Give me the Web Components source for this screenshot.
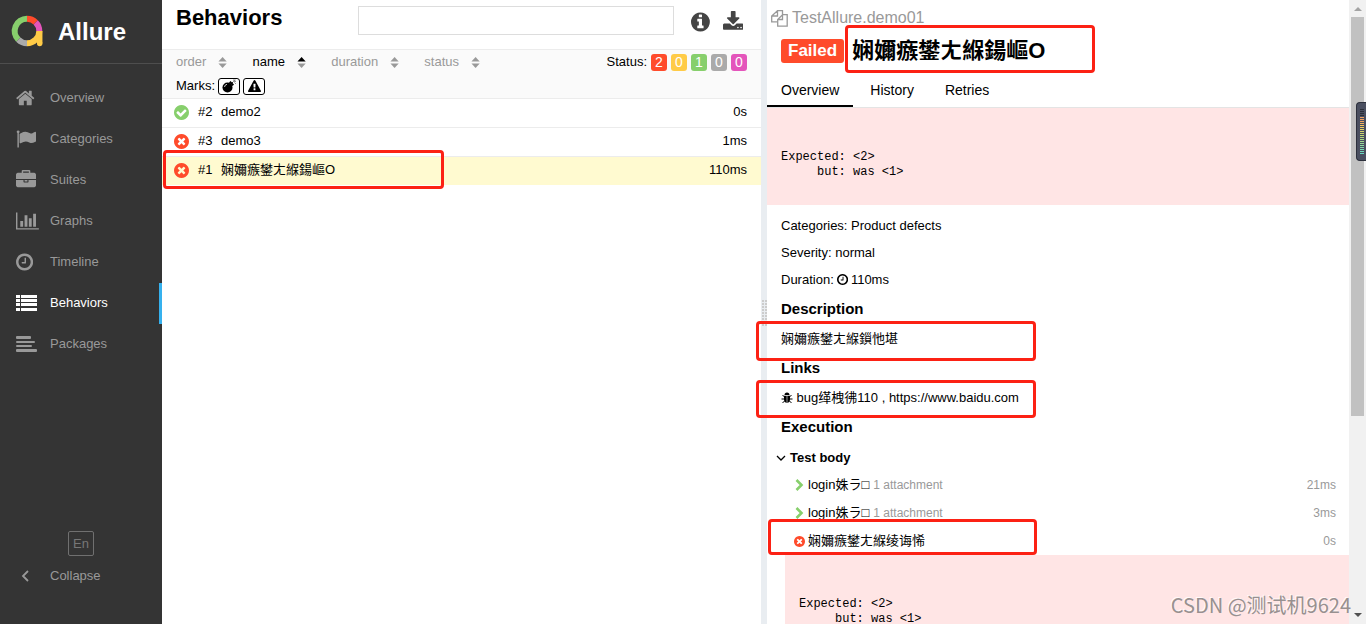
<!DOCTYPE html>
<html lang="en">
<head>
<meta charset="utf-8">
<title>Allure Report</title>
<style>
html,body{height:100%;margin:0}
body{font:13px/20px "Liberation Sans","Noto Sans CJK SC",sans-serif;color:#000;background:#fff;overflow:hidden}
</style>
</head>
<body>
<allure-app></allure-app>
<script>
const define = (name, html, setup) => {
  const t = document.createElement('template');
  t.innerHTML = '<style>*{box-sizing:border-box}:host{box-sizing:border-box}a{color:inherit;text-decoration:none}button{font:inherit;color:inherit;background:none;border:0;padding:0;margin:0;cursor:pointer}h1,h2,h3,p,pre{margin:0}</style>' + html;
  customElements.define(name, class extends HTMLElement {
    constructor() {
      super();
      this.attachShadow({mode: 'open'}).append(t.content.cloneNode(true));
    }
    connectedCallback() { if (setup) setup(this, this.shadowRoot); }
  });
};

const disc = 'M1664 896q0 209-103 385.5t-279.5 279.5-385.5 103-385.5-103-279.5-279.5-103-385.5 103-385.5 279.5-279.5 385.5-103 385.5 103 279.5 279.5 103 385.5z';
const ring = 'zm387-226q0 209-103 385.5t-279.5 279.5-385.5 103-385.5-103-279.5-279.5-103-385.5 103-385.5 279.5-279.5 385.5-103 385.5 103 279.5 279.5 103 385.5z';
const icons = {
  home: ['64 0 1664 1792', '<path d="M1472 992v480q0 26-19 45t-45 19h-384v-384h-256v384h-384q-26 0-45-19t-19-45v-480q0-1 .5-3t.5-3l575-474 575 474q1 2 1 6zm223-69l-62 74q-8 9-21 11h-3q-13 0-21-7l-692-577-692 577q-12 8-24 7-13-2-21-11l-62-74q-8-10-7-23.500t11-21.500l719-599q32-26 76-26t76 26l244 204v-195q0-14 9-23t23-9h192q14 0 23 9t9 23v408l219 182q10 8 11 21.500t-7 23.500z"/>'],
  flag: ['0 0 1792 1792', '<path d="M320 256q0 72-64 110v1266q0 13-9.500 22.500t-22.500 9.500h-64q-13 0-22.500-9.500t-9.500-22.500v-1266q-64-38-64-110 0-53 37.500-90.500t90.500-37.500 90.500 37.500 37.500 90.500zm1472 64v763q0 25-12.500 38.500t-39.500 27.500q-215 116-369 116-61 0-123.500-22t-108.500-48-115.500-48-142.500-22q-192 0-464 146-17 9-33 9-26 0-45-19t-19-45v-742q0-32 31-55 21-14 79-43 236-120 421-120 107 0 200 29t219 88q38 19 88 19 54 0 117.500-21t110-47 88-47 54.500-21q26 0 45 19t19 45z"/>'],
  briefcase: ['0 0 1792 1792', '<path d="M640 256h512v-128h-512v128zm1152 640v480q0 66-47 113t-113 47h-1472q-66 0-113-47t-47-113v-480h672v160q0 26 19 45t45 19h320q26 0 45-19t19-45v-160h672zm-768 0v128h-256v-128h256zm768-480v384h-1792v-384q0-66 47-113t113-47h352v-160q0-40 28-68t68-28h576q40 0 68 28t28 68v160h352q66 0 113 47t47 113z"/>'],
  chart: ['0 0 2048 1792', '<path d="M640 896v512h-256v-512h256zm384-512v1024h-256v-1024h256zm1024 1152v128h-2048v-1536h128v1408h1920zm-640-896v768h-256v-768h256zm384-384v1152h-256v-1152h256z"/>'],
  clock: ['128 0 1536 1792', '<path d="M1024 544v448q0 14-9 23t-23 9h-320q-14 0-23-9t-9-23v-64q0-14 9-23t23-9h224v-352q0-14 9-23t23-9h64q14 0 23 9t9 23zm416 352q0-148-73-273t-198-198-273-73-273 73-198 198-73 273 73 273 198 198 273 73 273-73 198-198 73-273zm224 0q0 209-103 385.500t-279.500 279.500-385.500 103-385.500-103-279.500-279.500-103-385.500 103-385.500 279.500-279.500 385.500-103 385.500 103 279.500 279.500 103 385.500z"/>'],
  list: ['0 0 21 20', '<path d="M0 2h4v3H0zM5 2h16v3H5zM0 6h4v3H0zM5 6h16v3H5zM0 10h4v3H0zM5 10h16v3H5zM0 15h4v3H0zM5 15h16v3H5z"/>'],
  lines: ['0 0 21 20', '<rect y="2" width="15" height="3" rx="1"/><rect y="7" width="19" height="2" rx="1"/><rect y="11" width="16" height="2" rx="1"/><rect y="15" width="21" height="3" rx="1"/>'],
  left: ['0 0 8 12', '<path d="M7 1 2 6l5 5" fill="none" stroke="currentColor" stroke-width="1.800"/>'],
  info: ['128 0 1536 1792', '<path d="M1152 1376v-160q0-14-9-23t-23-9h-96v-512q0-14-9-23t-23-9h-320q-14 0-23 9t-9 23v160q0 14 9 23t23 9h96v320h-96q-14 0-23 9t-9 23v160q0 14 9 23t23 9h448q14 0 23-9t9-23zm-128-896v-160q0-14-9-23t-23-9h-192q-14 0-23 9t-9 23v160q0 14 9 23t23 9h192q14 0 23-9t9-23zm640 416q0 209-103 385.500t-279.500 279.500-385.500 103-385.500-103-279.500-279.500-103-385.500 103-385.500 279.500-279.500 385.500-103 385.500 103 279.500 279.500 103 385.500z"/>'],
  download: ['64 0 1664 1792', '<path d="M1344 1344q0-26-19-45t-45-19-45 19-19 45 19 45 45 19 45-19 19-45zm256 0q0-26-19-45t-45-19-45 19-19 45 19 45 45 19 45-19 19-45zm128-224v320q0 40-28 68t-68 28h-1472q-40 0-68-28t-28-68v-320q0-40 28-68t68-28h465l135 136q58 56 136 56t136-56l136-136h464q40 0 68 28t28 68zm-325-569q17 41-14 70l-448 448q-18 19-45 19t-45-19l-448-448q-31-29-14-70 17-39 59-39h256v-448q0-26 19-45t45-19h256q26 0 45 19t19 45v448h256q42 0 59 39z"/>'],
  passed: ['128 128 1536 1536', '<path fill-rule="evenodd" d="M1412 734q0-28-18-46l-91-90q-19-19-45-19t-45 19l-408 407-226-226q-19-19-45-19t-45 19l-91 90q-18 18-18 46 0 27 18 45l362 362q19 19 45 19 27 0 46-19l543-543q18-18 18-45z' + disc + '"/>'],
  failed: ['128 128 1536 1536', '<path d="M1277 1122q0-26-19-45l-181-181 181-181q19-19 19-45 0-27-19-46l-90-90q-19-19-46-19-26 0-45 19l-181 181-181-181q-19-19-45-19-27 0-46 19l-90 90q-19 19-19 46 0 26 19 45l181 181-181 181q-19 19-19 45 0 27 19 46l90 90q19 19 46 19 26 0 45-19l181-181 181 181q19 19 45 19 27 0 46-19l90-90q19-19 19-46' + ring + '"/>'],
  warning: ['0 0 1792 1792', '<path d="M1024 1375v-190q0-14-9.500-23.500t-22.500-9.500h-192q-13 0-22.500 9.500t-9.500 23.500v190q0 14 9.500 23.500t22.500 9.500h192q13 0 22.500-9.500t9.500-23.500zm-2-374l18-459q0-12-10-19-13-11-24-11h-220q-11 0-24 11-10 7-10 21l17 457q0 10 10 16.500t24 6.500h185q14 0 23.500-6.500t10.500-16.500zm-14-934l768 1408q35 63-2 126-17 29-46.500 46t-63.500 17h-1536q-34 0-63.500-17t-46.500-46q-37-63-2-126l768-1408q17-31 47-49t65-18 65 18 47 49z"/>'],
  bomb: ['0 0 14 14', '<circle cx="5.500" cy="8.500" r="5"/><path d="M7 3.500 8.500 2 12 5.500 10.500 7z"/><path d="m10 4 1.500-1.500M12 .5v1.200M13.500 2.500h-1M13.700.7l-.8.8M13.500 4.500l-.8-.8" stroke="currentColor" stroke-width=".8"/><path d="M2.500 8a3 3 0 0 1 2.500-2.700" stroke="#fff" stroke-width=".8" fill="none"/>'],
  sort: ['0 0 10 12', '<path d="M5 0 9.500 5h-9z" class="up"/><path d="M5 12 9.500 7h-9z"/>'],
  copy: ['0 0 17 17', '<path d="M6.500 4V.7h5V4.700M6.500.7.7 6v5.800H6M.7 6h5.800V1M11.500 4.700h4.700v11.500H6.700V9.500l4.800-4.800v4.800H7" fill="none" stroke="currentColor" stroke-width="1.300"/>'],
  bug: ['0 0 12 12', '<path d="M3.500 3a2.500 2.500 0 0 1 5 0zM3 3.800h2.700V11Q3 10.500 3 8zM6.300 3.800H9V8q0 2.500-2.700 3z"/><path d="M3.500 5 1.500 3M8.500 5l2-2M3 7H.5M9 7h2.500M3.500 9l-2 2M8.500 9l2 2" stroke="currentColor"/>'],
  down: ['0 0 10 10', '<path d="m1 3 4 4 4-4" fill="none" stroke="currentColor" stroke-width="1.300"/>'],
  right: ['0 0 9 12', '<path d="m1.500 1 5 5-5 5" fill="none" stroke="currentColor" stroke-width="2.600"/>'],
};
define('al-icon', '<style>:host{display:inline-flex;flex:none}div{display:flex}svg{display:block;width:auto}.up{fill:var(--up,currentColor)}</style><div></div>', (host, root) => {
  const [box, body] = icons[host.getAttribute('name')];
  const h = host.getAttribute('size') || 20;
  root.querySelector('div').innerHTML = `<svg viewBox="${box}" height="${h}" fill="currentColor" aria-hidden="true">${body}</svg>`;
});

define('side-link', `<style>
:host{display:block;color:#999}
a{display:flex;align-items:center;height:41px;padding:0 0 2px 16px;border-right:3px solid transparent}
span{width:34px;flex:none;display:flex}
:host([active]){color:#fff}
:host([active]) a{border-color:#36b1ee}
</style><a href="#"><span><slot name="icon"></slot></span><slot></slot></a>`);

define('side-nav', `<style>
:host{display:flex;flex-direction:column;background:#343434}
header{display:flex;align-items:center;gap:14px;height:64px;padding-left:11px;border-bottom:1px solid #4e4e4e;font-weight:bold;font-size:24px;color:#fff}
svg{flex:none}
nav{padding-top:14px}
footer{margin-top:auto;padding-bottom:28px;color:#999}
.lang{display:block;width:26px;height:25px;margin:0 auto;border:1px solid #707070;border-radius:2px;color:#777}
.fold{display:flex;align-items:center;height:40px;padding-left:21px;width:100%}
.fold al-icon{width:29px}
</style>
<header>
<svg width="33" height="33" viewBox="0 0 33 33" fill="none" stroke-width="6">
<path d="M7.300 24.700A12.300 12.300 0 0 1 16 3.700" stroke="#87cf6c"/>
<path d="M16 3.700A12.300 12.300 0 0 1 24.700 7.300" stroke="#ff4b2b"/>
<path d="M24.700 7.300A12.300 12.300 0 0 1 28.300 16" stroke="#e455bb"/>
<path d="M16 28.300A12.300 12.300 0 0 1 7.300 24.700" stroke="#aaa"/>
<path d="M28.300 16A12.300 12.300 0 0 1 16 28.300" stroke="#ffcb47"/>
<path d="M28.700 16v12.500" stroke="#ffcb47" stroke-width="5.500"/><circle cx="28.700" cy="28.500" r="2.700" fill="#ffcb47" stroke="none"/>
</svg>Allure</header>
<nav>
<side-link><al-icon slot="icon" name="home"></al-icon>Overview</side-link>
<side-link><al-icon slot="icon" name="flag"></al-icon>Categories</side-link>
<side-link><al-icon slot="icon" name="briefcase"></al-icon>Suites</side-link>
<side-link><al-icon slot="icon" name="chart"></al-icon>Graphs</side-link>
<side-link><al-icon slot="icon" name="clock"></al-icon>Timeline</side-link>
<side-link active><al-icon slot="icon" name="list"></al-icon>Behaviors</side-link>
<side-link><al-icon slot="icon" name="lines"></al-icon>Packages</side-link>
</nav>
<footer><button class="lang">En</button><button class="fold"><al-icon name="left" size="12"></al-icon>Collapse</button></footer>`);

define('sort-button', `<style>
:host{display:block;color:#999}
button{display:flex;align-items:center;gap:12px}
al-icon{color:#999}
:host([active]){color:#000;--up:#000}
</style><button><slot></slot><al-icon name="sort" size="11"></al-icon></button>`);

define('count-badge', `<style>
:host{display:block}
button{display:block;width:16px;height:17px;border-radius:3px;background:var(--tone);color:#fff;font-size:14px;line-height:17px;text-align:center}
</style><button><slot></slot></button>`);

define('list-row', `<style>
:host{display:block;border-bottom:1px solid #ececec}
a{display:flex;align-items:center;height:28px;padding:0 14px 2px 12px}
.i{width:24px;padding-top:1px;display:flex}
.n{width:23px}
.t{margin-left:auto}
:host([selected]){background:#fffad0;border:0}
:host([status=passed]) .i{color:#87cf6c}
:host([status=failed]) .i{color:#ff4b2b}
</style><a href="#"><span class="i"></span><span class="n"><slot name="order"></slot></span><slot></slot><span class="t"><slot name="time"></slot></span></a>`, (host, root) => {
  root.querySelector('.i').innerHTML = `<al-icon name="${host.getAttribute('status')}" size="15"></al-icon>`;
});

define('test-tree', `<style>
:host{display:block;min-width:0}
header{display:flex;height:50px;padding:6px 18px 0 14px;border-bottom:1px solid #ececec}
h1{font-size:22px;line-height:24px;width:182px;flex:none}
input{flex:1;min-width:0;height:29px;border:1px solid #ddd;background:#fff;font:inherit}
.act{display:flex;gap:13px;margin-left:17px;padding-top:5px;color:#444}
.act button{display:block;height:22px}
.bar{background:#fafafa;height:49px;border-bottom:1px solid #ececec;padding:2px 14px 0}
.sorts{display:flex;height:20px;line-height:20px}
.sorts sort-button{margin-right:25px}
.st{margin-left:auto;display:flex;align-items:center;gap:4px}
.marks{display:flex;align-items:center;gap:3px;height:28px}
.marks button{display:flex;align-items:center;justify-content:center;width:22px;height:17px;border:1px solid #000;border-radius:3px;background:#fff}
</style>
<header><h1>Behaviors</h1><input type="search" aria-label="Search"><div class="act"><button aria-label="Info"><al-icon name="info" size="22"></al-icon></button><button aria-label="Download"><al-icon name="download" size="22"></al-icon></button></div></header>
<div class="bar">
<div class="sorts"><sort-button>order</sort-button><sort-button active>name</sort-button><sort-button>duration</sort-button><sort-button>status</sort-button>
<div class="st">Status: <count-badge style="--tone:#ff4b2b">2</count-badge><count-badge style="--tone:#ffcb47">0</count-badge><count-badge style="--tone:#87cf6c">1</count-badge><count-badge style="--tone:#aaa">0</count-badge><count-badge style="--tone:#e455bb">0</count-badge></div></div>
<div class="marks">Marks: <button aria-label="Flaky"><al-icon name="bomb" size="14"></al-icon></button><button aria-label="Broken"><al-icon name="warning" size="13"></al-icon></button></div>
</div>
<list-row status="passed"><span slot="order">#2</span>demo2<span slot="time">0s</span></list-row>
<list-row status="failed"><span slot="order">#3</span>demo3<span slot="time">1ms</span></list-row>
<list-row status="failed" selected><span slot="order">#1</span>娴嬭瘯鐢ㄤ緥鍚嶇О<span slot="time">110ms</span></list-row>`);

define('error-trace', `<style>
:host{display:block;background:#ffe5e5}
pre{padding:42px 14px 25px;font:12px/15px "Liberation Mono",monospace}
</style><pre>Expected: &lt;2&gt;
     but: was &lt;1&gt;</pre>`);

define('info-section', `<style>
:host{display:block;padding:0 14px}
h3{font-size:15px;line-height:20px}
p{padding:10px 0 9px;line-height:20px}
</style><h3><slot name="title"></slot></h3><p><slot></slot></p>`);

define('test-step', `<style>
:host{display:block}
button{display:flex;align-items:center;width:100%;height:28px;padding:0 13px 0 27px;text-align:left;line-height:20px}
.i{width:14px;display:flex;color:#ff4b2b}
:host([status=passed]) .i{color:#87cf6c;padding-left:1px}
.a,.t{color:#999}
.a{margin-left:4px;font-size:12px}
.t{margin-left:auto;font-size:12px}
</style><button><span class="i"></span><slot></slot><span class="a"><slot name="note"></slot></span><span class="t"><slot name="time"></slot></span></button>`, (host, root) => {
  const ok = host.getAttribute('status') === 'passed';
  root.querySelector('.i').innerHTML = `<al-icon name="${ok ? 'right' : 'failed'}" size="${ok ? 12 : 11}"></al-icon>`;
});

define('test-result', `<style>
:host{display:block;min-width:0;overflow:hidden}
.path{display:flex;align-items:center;gap:4px;height:28px;padding:8px 4px 0;font-size:16px;color:#999}
.title{display:flex;align-items:center;gap:8px;height:45px;padding-left:14px}
.title span{height:24px;padding:0 7px;border-radius:3px;background:#ff4b2b;color:#fff;font-weight:bold;font-size:17px;line-height:24px}
h2{font-size:22px;line-height:28px}
.tabs{display:flex;gap:3px;height:35px;border-bottom:1px solid #e4e4e4}
.tabs a{height:34px;padding:0 14px;font-size:14px;line-height:34px}
.tabs .on{border-bottom:2px solid #000}
.facts{padding:7px 14px 6px}
.facts p{display:flex;align-items:center;gap:3px;line-height:27px}
.body{display:flex;align-items:center;gap:4px;width:100%;height:26px;padding-left:9px;font-weight:bold}
.exec{padding:0 14px 8px;font-size:15px}
error-trace.in{margin-left:18px}
</style>
<div class="path"><al-icon name="copy" size="17"></al-icon><a href="#">TestAllure.demo01</a></div>
<div class="title"><span>Failed</span><h2>娴嬭瘯鐢ㄤ緥鍚嶇О</h2></div>
<nav class="tabs"><a href="#" class="on">Overview</a><a href="#">History</a><a href="#">Retries</a></nav>
<error-trace></error-trace>
<div class="facts"><p>Categories: Product defects</p><p>Severity: normal</p><p>Duration: <al-icon name="clock" size="13"></al-icon>110ms</p></div>
<info-section><span slot="title">Description</span>娴嬭瘯鐢ㄤ緥鎻忚堪</info-section>
<info-section><span slot="title">Links</span><a href="#"><al-icon name="bug" size="12" style="vertical-align:-2px"></al-icon> bug缂栧彿110</a> , <a href="#">https://www.baidu.com</a></info-section>
<h3 class="exec">Execution</h3>
<button class="body"><al-icon name="down" size="10"></al-icon>Test body</button>
<test-step status="passed">login姝ラ□<span slot="note">1 attachment</span><span slot="time">21ms</span></test-step>
<test-step status="passed">login姝ラ□<span slot="note">1 attachment</span><span slot="time">3ms</span></test-step>
<test-step status="failed">娴嬭瘯鐢ㄤ緥绫诲悕<span slot="time">0s</span></test-step>
<error-trace class="in"></error-trace>`);

define('split-gutter', `<style>
:host{display:flex;align-items:center;justify-content:center;background:#e9edf1}
i{width:5px;height:27px;background:repeating-linear-gradient(#e9edf1 0 1px,transparent 1px 3px),repeating-linear-gradient(90deg,#ccc 0 2px,#e9edf1 2px 3px)}
</style><i></i>`);

define('scroll-rail', `<style>
:host{display:flex;flex-direction:column;align-items:center;background:#f1f1f1;position:relative}
i{border:4px solid transparent;border-top:0;border-bottom:4px solid #a3a3a3;margin:7px 0 6px}
i.d{border-top:4px solid #505050;border-bottom:0;margin:auto 0 7px}
b{width:13px;height:64%;background:#c1c1c1}
.meter{position:absolute;right:0;top:102px;width:10px;height:59px;border:1px solid #2c303c;border-right:0;border-radius:4px 0 0 4px;background:#4a4f60;padding:6px 0 0 3px}
.meter u{display:block;width:4px;height:46px;background:repeating-linear-gradient(transparent 0 1px,#4a4f60 1px 2px),linear-gradient(#2a2e38 0 18%,#f0a060 18% 26%,#f0cf60 40%,#b8d878 60%,#60d8c8)}
</style><i></i><b></b><i class="d"></i><div class="meter"><u></u></div>`);

define('mark-box', '<style>:host{position:absolute;border:3px solid #fc2114;border-radius:4px;pointer-events:none}</style>');

define('allure-app', `<style>
:host{display:grid;grid-template-columns:162px minmax(0,599fr) 6px minmax(0,582fr) 17px;grid-template-rows:100%;height:100vh;position:relative;overflow:hidden}
.wm{position:absolute;right:15px;bottom:5px;font:20px/28px "Noto Sans CJK SC",sans-serif;color:#989090;text-shadow:-1px -1px #fffc}
</style>
<side-nav></side-nav><test-tree></test-tree><split-gutter></split-gutter><test-result></test-result><scroll-rail></scroll-rail>
<mark-box style="left:163px;top:150px;width:281px;height:39px"></mark-box>
<mark-box style="left:845px;top:25px;width:250px;height:48px"></mark-box>
<mark-box style="left:756px;top:321px;width:280px;height:40px"></mark-box>
<mark-box style="left:756px;top:380px;width:280px;height:38px"></mark-box>
<mark-box style="left:768px;top:519px;width:269px;height:36px"></mark-box>
<div class="wm">CSDN @测试机9624</div>`);
</script>
</body>
</html>
